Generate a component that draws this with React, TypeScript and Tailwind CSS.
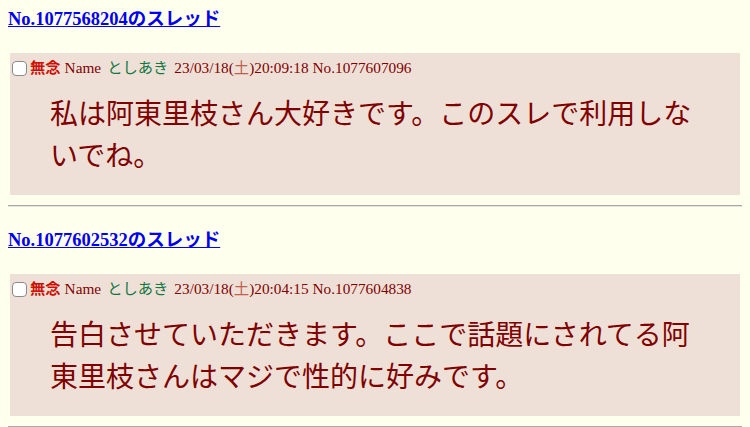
import React from "react";

const posts = [
  {
    thread: "No.1077568204のスレッド",
    date: "23/03/18(",
    time: ")20:09:18 No.1077607096",
    body: "私は阿東里枝さん大好きです。このスレで利用しないでね。",
  },
  {
    thread: "No.1077602532のスレッド",
    date: "23/03/18(",
    time: ")20:04:15 No.1077604838",
    body: "告白させていただきます。ここで話題にされてる阿東里枝さんはマジで性的に好みです。",
  },
];

export default function App() {
  return (
    <div
      className="min-h-[427px] w-[750px] bg-[#FFFFEE] px-[8px] pt-[8px]"
      style={{ fontFamily: '"Liberation Serif", "Noto Sans CJK JP", serif' }}
    >
      {posts.map((p, i) => (
        <div key={i} className="flex flex-col">
          <a
            href="#"
            className={`text-[18.5px] font-bold leading-[22px] text-[#0000EE] underline ${i === 0 ? "" : "mt-[22px]"}`}
          >
            {p.thread}
          </a>
          <div className="mx-[2px] mt-[23px] h-[142px] bg-[#EFE0D7] pt-[4px]">
            <div className="flex items-center text-[15.3px] leading-[22px] text-[#800000]">
              <span className="ml-[2px] mr-[3px] inline-block h-[15px] w-[15px] rounded-[4px] border border-[#8a8a8a] bg-white" />
              <span className="font-bold text-[#CC1105]">無念</span>
              <span className="ml-[4px]">Name</span>
              <span className="ml-[6px] text-[#117743]">としあき</span>
              <span className="ml-[6px]">
                {p.date}
                <span className="text-[#c06050]">土</span>
                {p.time}
              </span>
            </div>
            <div className="mx-[40px] mt-[15px] text-[28px] leading-[42px] text-[#800000]">
              {p.body}
            </div>
          </div>
          <div className="mt-[10px] h-[2px] border-t border-[#a8a8a8] bg-[#e4e4dc]" />
        </div>
      ))}
    </div>
  );
}
